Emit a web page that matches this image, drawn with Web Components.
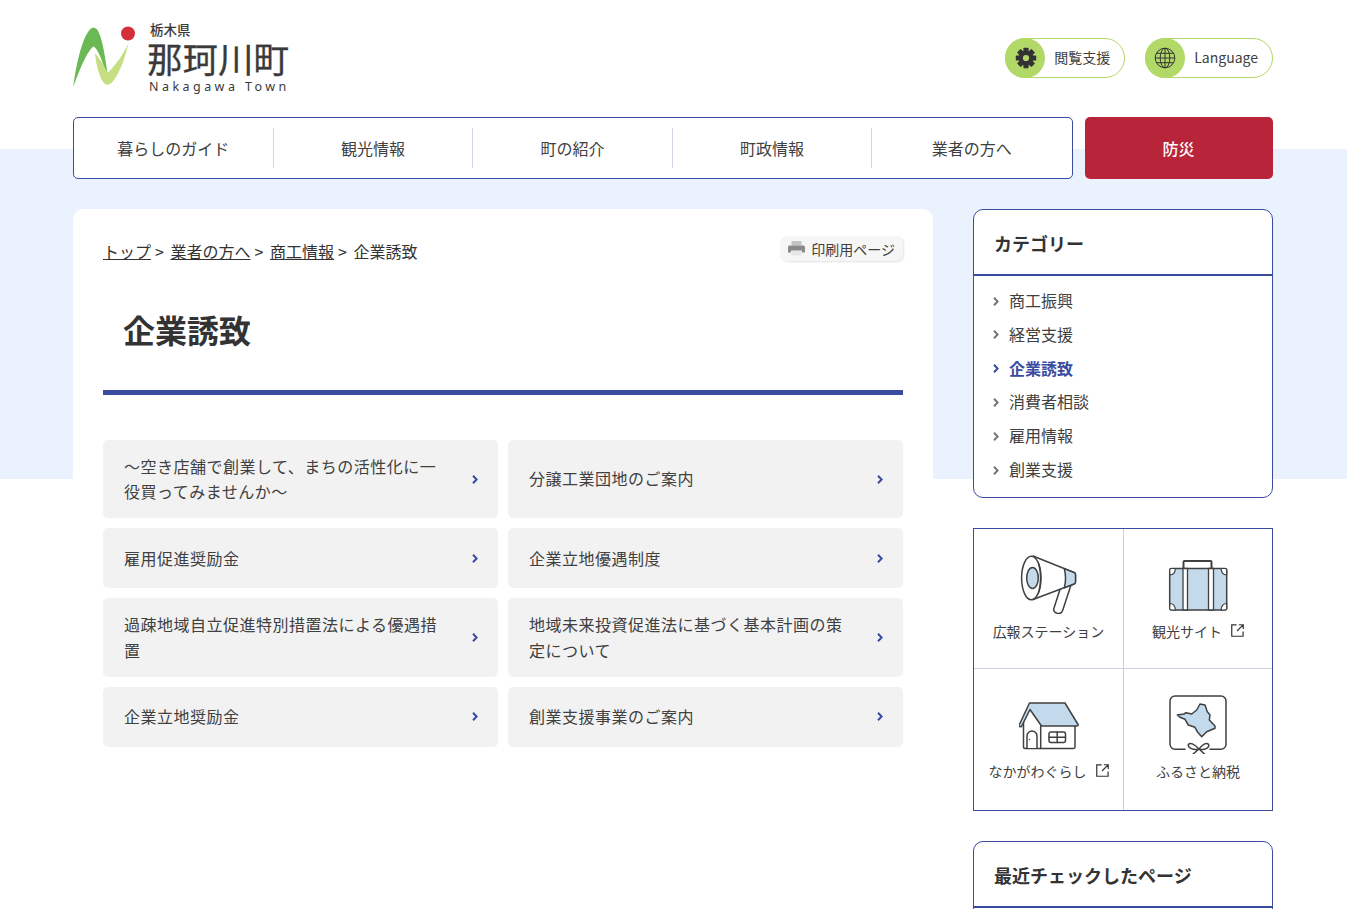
<!DOCTYPE html>
<html lang="ja">
<head>
<meta charset="utf-8">
<title>企業誘致 | 那珂川町</title>
<style>
html{overflow:hidden}
html,body{margin:0;padding:0;height:100%}
body{font-family:"Noto Sans CJK JP","Noto Sans",sans-serif;color:#333;font-size:16px;background:#fff}
</style>
</head>
<body>
<site-page>
  <site-header slot="header"></site-header>
  <main-nav slot="nav">
    <nav-item>暮らしのガイド</nav-item>
    <nav-item>観光情報</nav-item>
    <nav-item>町の紹介</nav-item>
    <nav-item>町政情報</nav-item>
    <nav-item>業者の方へ</nav-item>
  </main-nav>
  <content-card slot="main" heading="企業誘致">
    <link-card>〜空き店舗で創業して、まちの活性化に一役買ってみませんか〜</link-card>
    <link-card>分譲工業団地のご案内</link-card>
    <link-card>雇用促進奨励金</link-card>
    <link-card>企業立地優遇制度</link-card>
    <link-card>過疎地域自立促進特別措置法による優遇措置</link-card>
    <link-card>地域未来投資促進法に基づく基本計画の策定について</link-card>
    <link-card>企業立地奨励金</link-card>
    <link-card>創業支援事業のご案内</link-card>
  </content-card>
  <side-box slot="side" heading="カテゴリー">
    <side-item>商工振興</side-item>
    <side-item>経営支援</side-item>
    <side-item current>企業誘致</side-item>
    <side-item>消費者相談</side-item>
    <side-item>雇用情報</side-item>
    <side-item>創業支援</side-item>
  </side-box>
  <icon-grid slot="side">
    <icon-cell icon="mega">広報ステーション</icon-cell>
    <icon-cell icon="case" external>観光サイト</icon-cell>
    <icon-cell icon="house" external>なかがわぐらし</icon-cell>
    <icon-cell icon="map">ふるさと納税</icon-cell>
  </icon-grid>
  <side-box slot="side" heading="最近チェックしたページ"></side-box>
</site-page>

<script>
function shadow(el, html){
  const r = el.attachShadow({mode:'open'});
  r.innerHTML = html;
  return r;
}
const BLUE = '#3a4ba0';
const INK = '#404040';
const FILL = '#c3daec';

customElements.define('site-page', class extends HTMLElement{
  constructor(){super();shadow(this,`<style>
    :host{display:block;min-height:100%;background:linear-gradient(#eaf3fd,#eaf3fd) 0 149px/100% 330px no-repeat}
    .wrap{width:1200px;margin:0 0 0 73px}
    .bar{display:flex;gap:12px}
    .alert{flex:0 0 188px;box-sizing:border-box;padding-right:1px;height:62px;display:flex;align-items:center;justify-content:center;background:#b8243a;color:#fff;border-radius:5px;font-weight:500;font-size:16px}
    .cols{display:flex;gap:40px;margin-top:30px;align-items:flex-start}
    .main{flex:0 0 860px}
    .side{flex:0 0 300px;width:300px;display:flex;flex-direction:column;gap:30px}
  </style><div class="wrap">
    <slot name="header"></slot>
    <div class="bar"><slot name="nav"></slot><div class="alert">防災</div></div>
    <div class="cols"><div class="main"><slot name="main"></slot></div><div class="side"><slot name="side"></slot></div></div>
  </div>`)}
});

customElements.define('site-header', class extends HTMLElement{
  constructor(){super();shadow(this,`<style>
    :host{display:flex;justify-content:space-between;height:117px;box-sizing:border-box}
    .logo{display:flex;padding-top:19px;color:#3a3a3a}
    svg.mark{width:62px;height:72px;display:block;margin-top:6px}
    .txt{margin-left:12px;display:flex;flex-direction:column;width:150px}
    .pref{font-size:13.500px;line-height:20px;font-weight:500;margin-left:3px}
    .name{font-size:35.500px;line-height:40px;font-weight:400;-webkit-text-stroke:.3px #3a3a3a;margin-top:-1px;white-space:nowrap;letter-spacing:0}
    .en{font-family:"Noto Sans",sans-serif;font-size:12.500px;line-height:16px;letter-spacing:3.450px;margin:1px 0 0 2px;white-space:nowrap}
    .tools{display:flex;gap:20px;padding-top:38px}
  </style>
  <div class="logo">
    <svg class="mark" viewBox="73 25 62 72" aria-hidden="true">
      <path d="M73.300 87C76 65 82 38 90 29.500C92 27 95 27 97 29.500C102 36 105 55 107.500 73L105 70C102 60 98 49 93.500 46.500C88 50 80 68 73.300 87Z" fill="#6bb955"/>
      <path d="M95 53C100 59 104 65 107.500 73C115 66 123 55 128.500 43C125 58 120 72 114 80C111 84 108 86 105 84C100 80 96 65 95 53Z" fill="#c5de82"/>
      <circle cx="128" cy="33.500" r="7" fill="#d4303a"/>
    </svg>
    <div class="txt">
      <div class="pref">栃木県</div>
      <div class="name">那珂川町</div>
      <div class="en">Nakagawa Town</div>
    </div>
  </div>
  <div class="tools">
    <tool-pill icon="gear">閲覧支援</tool-pill>
    <tool-pill icon="globe">Language</tool-pill>
  </div>`)}
});

const teeth = Array.from({length:8},(_,i)=>`<rect x="-2.600" y="-10.200" width="5.200" height="5" rx=".6" transform="rotate(${i*45})"/>`).join('');
const ICON_PILL = {
  gear:`<svg width="22" height="22" viewBox="-11 -11 22 22" style="margin-left:2px"><g fill="#333">${teeth}</g><circle r="5.300" fill="none" stroke="#333" stroke-width="4.400"/></svg>`,
  globe:`<svg width="22" height="22" viewBox="-11 -11 22 22" fill="none" stroke="#333" stroke-width="1"><circle r="9.800"/><ellipse rx="4.800" ry="9.800"/><path d="M0-9.800V9.800M-9.800 0H9.800M-8.600-4.700H8.600M-8.600 4.700H8.600"/></svg>`
};
customElements.define('tool-pill', class extends HTMLElement{
  constructor(){super();shadow(this,`<style>
    :host{display:flex;align-items:center;height:40px;box-sizing:border-box;border:1px solid #b2d968;border-radius:20px;background:#fff;padding-right:14px;font-size:14px;line-height:20px;color:#404040}
    .c{width:40px;height:40px;margin:-1px 9px -1px -1px;border-radius:50%;background:#b2d968;display:flex;align-items:center;justify-content:center;flex:none}
    .t{display:block;margin-top:-2px}
    svg{display:block}
  </style><span class="c">${ICON_PILL[this.getAttribute('icon')]}</span><span class="t"><slot></slot></span>`)}
});

customElements.define('main-nav', class extends HTMLElement{
  constructor(){super();shadow(this,`<style>
    :host{flex:0 0 1000px;box-sizing:border-box;height:62px;padding-right:1px;display:flex;align-items:center;background:#fff;border:1px solid ${BLUE};border-radius:5px}
  </style><slot></slot>`)}
});
customElements.define('nav-item', class extends HTMLElement{
  constructor(){super();shadow(this,`<style>
    :host{flex:1 1 0;box-sizing:border-box;height:40px;display:flex;align-items:center;justify-content:center;font-size:16px;color:#404040;border-right:1px solid #d2d6e4}
    :host(:last-child){border-right:0}
  </style><slot></slot>`)}
});

customElements.define('content-card', class extends HTMLElement{
  constructor(){super();shadow(this,`<style>
    :host{display:block;background:#fff;border-radius:10px 10px 0 0;padding:30px;min-height:600px;box-sizing:border-box}
    .crumbhead{display:flex;justify-content:space-between;align-items:flex-start}
    .crumbs{font-size:16px;line-height:26px;color:#333;display:flex;margin-top:-1px}
    .crumbs a{color:#333;text-decoration:underline}
    .crumbs i{font-style:normal;padding-left:4px;width:15.500px;text-align:left}
    .crumbs b{font-weight:400}
    .print{display:flex;align-items:center;gap:5px;height:25px;box-sizing:border-box;padding:0 9px 0 8px;background:#f6f6f6;border-radius:7px;font-size:14px;line-height:20px;color:#404040;margin:-3px 0 0 0;box-shadow:1px 1px 2px rgba(0,0,0,.12)}
    .print span{display:block;margin-right:-1px}
    h1{margin:41px 0 0;padding:0 0 37px 20px;font-size:32px;line-height:48px;font-weight:700;color:#333;border-bottom:5px solid ${BLUE}}
    .grid{display:grid;grid-template-columns:395px 395px;gap:10px;margin-top:45px}
  </style>
  <div class="crumbhead">
    <div class="crumbs"><a>トップ</a><i>&gt;</i><a>業者の方へ</a><i>&gt;</i><a>商工情報</a><i>&gt;</i><b>企業誘致</b></div>
    <div class="print"><svg width="18" height="15" viewBox="0 0 18 15"><path d="M3.500 0h10v4.500h-10z" fill="#c4c4c4"/><path d="M1.500 4.500h14A1.500 1.500 0 0 1 17 6v5.500h-3V9.500H3v2H0V6a1.500 1.500 0 0 1 1.500-1.500z" fill="#8a8a8a"/><path d="M3.500 10h10v4.500h-10z" fill="#e6e6e6"/></svg><span>印刷用ページ</span></div>
  </div>
  <h1>${this.getAttribute('heading')}</h1>
  <div class="grid"><slot></slot></div>`)}
});

customElements.define('link-card', class extends HTMLElement{
  constructor(){super();shadow(this,`<style>
    :host{display:flex;align-items:center;box-sizing:border-box;min-height:60px;padding:13.600px 20px 13.600px 21px;background:#f2f2f2;border-radius:5px;font-size:16px;line-height:25.600px;letter-spacing:.5px;color:#404040}
    .t{flex:1;min-width:0;padding-right:30px;max-width:320px}
    svg{flex:none;display:block}
  </style><div class="t"><slot></slot></div><svg width="6" height="9" viewBox="0 0 6 9" fill="none" stroke="${BLUE}" stroke-width="2"><path d="M1 .8 4.600 4.500 1 8.200"/></svg>`)}
});

customElements.define('side-box', class extends HTMLElement{
  constructor(){super();shadow(this,`<style>
    :host{display:block;background:#fff;border:1px solid ${BLUE};border-radius:10px;box-sizing:border-box}
    h2{margin:0;padding:2px 20px 0;box-sizing:border-box;height:66px;display:flex;align-items:center;font-size:18px;font-weight:700;color:#333;border-bottom:2px solid ${BLUE}}
    .l{display:flex;flex-direction:column;padding:7.200px 19px 10.800px}
  </style><h2>${this.getAttribute('heading')}</h2><div class="l"><slot></slot></div>`)}
});
customElements.define('side-item', class extends HTMLElement{
  constructor(){super();const cur=this.hasAttribute('current');shadow(this,`<style>
    :host{display:flex;align-items:center;height:33.800px;font-size:16px;color:${cur?BLUE:'#404040'};font-weight:${cur?700:400}}
    svg{display:block;margin:2px 10px 0 0;flex:none}
  </style><svg width="6" height="9" viewBox="0 0 6 9" fill="none" stroke="${cur?BLUE:'#777'}" stroke-width="2"><path d="M1 .8 4.600 4.500 1 8.200"/></svg><slot></slot>`)}
});

customElements.define('icon-grid', class extends HTMLElement{
  constructor(){super();shadow(this,`<style>
    :host{display:grid;grid-template-columns:150px 148px;grid-template-rows:140px 141px;background:#fff;border:1px solid ${BLUE};box-sizing:border-box;height:283px;width:300px}
  </style><slot></slot>`)}
});

const S = `fill="none" stroke="${INK}" stroke-width="1.500" stroke-linejoin="round" stroke-linecap="round"`;
const ICONS = {
 mega:`<svg viewBox="44 24 60 60" width="60" height="60">
   <path d="M85 59.500 79 78c-1 3 1 5 4 5.500 2.500.3 4-1 4.800-3.500L96 55" fill="#fff" stroke="${INK}" stroke-width="1.500" stroke-linejoin="round"/>
   <path d="M58 26 99 42.500q1.500.6 1.500 2v7.500q0 1.500-1.500 2L58 69.500" fill="#fff" ${S}/>
   <path d="M89.300 38.600 99 42.500q1.500.6 1.500 2v7.500q0 1.500-1.500 2L89.300 57.700q2.500-9.500 0-19.100z" fill="${FILL}" ${S}/>
   <ellipse cx="56.300" cy="48" rx="9.700" ry="21.700" fill="#fff" ${S}/>
   <ellipse cx="57.500" cy="48" rx="5.800" ry="10.500" fill="${FILL}" ${S}/>
   <path d="M63.800 34c2.400 8 2.400 20 0 28" ${S}/>
 </svg>`,
 case:`<svg viewBox="193 24 60 60" width="60" height="60">
   <path d="M208.500 38v-6a1 1 0 0 1 1-1h26a1 1 0 0 1 1 1v6" fill="none" stroke="${INK}" stroke-width="2"/>
   <rect x="194.700" y="38.500" width="57" height="41.500" rx="2" fill="${FILL}" stroke="${INK}" stroke-width="1.500"/>
   <path d="M208 38.500h4.500v41.500H208zM233.500 38.500h5v41.500h-5z" fill="#fff" stroke="${INK}" stroke-width="1.300"/>
   <path d="M195 45c2.500 0 5-2 5.500-6.500h-4a1.800 1.800 0 0 0-1.800 1.800zM251.500 45c-2.500 0-5-2-5.500-6.500h4a1.800 1.800 0 0 1 1.800 1.800zM195 73.500c2.500 0 5 2 5.500 6.500h-4a1.800 1.800 0 0 1-1.800-1.800zM251.500 73.500c-2.500 0-5 2-5.500 6.500h4a1.800 1.800 0 0 0 1.800-1.800z" fill="#fff" stroke="${INK}" stroke-width="1.200"/>
 </svg>`,
 house:`<svg viewBox="44 24 60 60" width="60" height="60">
   <path d="M48.500 52v25a1.500 1.500 0 0 0 1.500 1.500h48.500a1.500 1.500 0 0 0 1.500-1.500V56" fill="#fff" ${S}/>
   <path d="M54.500 33h35.500L103 54.500c.5 1-.2 1.500-1 1.500H66.500L55 39.500 46.500 56.500c-1 .8-2.800 0-2.300-1.500z" fill="${FILL}" ${S}/>
   <path d="M65.700 56v22.500" ${S}/>
   <path d="M52 78v-12a5 5 0 0 1 10 0v12" fill="#fff" ${S}/>
   <circle cx="54.500" cy="69.500" r=".7" fill="${INK}"/>
   <rect x="74" y="62" width="16.500" height="10.500" rx="2" fill="#fff" ${S}/>
   <path d="M82.200 62v10.500M74 67.200h16.500" ${S}/>
 </svg>`,
 map:`<svg viewBox="193 24 60 60" width="60" height="60">
   <path d="M210 79.300h-10a5 5 0 0 1-5-5V31a5 5 0 0 1 5-5h46a5 5 0 0 1 5 5v43.300a5 5 0 0 1-5 5h-11" fill="none" ${S}/>
   <path d="M202.300 45 209 44 211 42.700 216.700 44 221.700 40 225 34 230 35 232.300 41.700 235 45 234.300 50 240 56 240 58.300 231.700 61.700 226.700 66.700 222.300 61.700 220 57.300 213.300 55 210 49.300 205 47.300z" fill="${FILL}" ${S}/>
   <path d="M224 79c-5-5-9-7-10.500-4.500C212 77 218 81 224 79zM224 79c4-5 8-7 9.500-4.500C235 77 230 81 224 79zM224 79l-6.500 5.500M224 79l6 5.500" fill="none" ${S}/>
 </svg>`
};
const EXT = `<svg class="ext" width="13" height="13" viewBox="0 0 14 14" fill="none" stroke="#333" stroke-width="1.300"><path d="M6 1H.8v12.200H13V8M8.500.8H13.200V5.500M13 1 6.500 7.500"/></svg>`;
customElements.define('icon-cell', class extends HTMLElement{
  constructor(){super();const ext=this.hasAttribute('external');shadow(this,`<style>
    :host{display:flex;flex-direction:column;align-items:center;box-sizing:border-box;padding-top:25px;font-size:14px;line-height:20px;color:#404040}
    :host(:nth-child(odd)){border-right:1px solid #c9cfe3}
    :host(:nth-child(-n+2)){border-bottom:1px solid #c9cfe3}
    svg{display:block}
    .lab{display:flex;align-items:center;margin-top:7px;white-space:nowrap}
    .ext{margin-left:9px}
  </style>${ICONS[this.getAttribute('icon')]}<div class="lab"><slot></slot>${ext?EXT:''}</div>`)}
});
</script>
</body>
</html>
